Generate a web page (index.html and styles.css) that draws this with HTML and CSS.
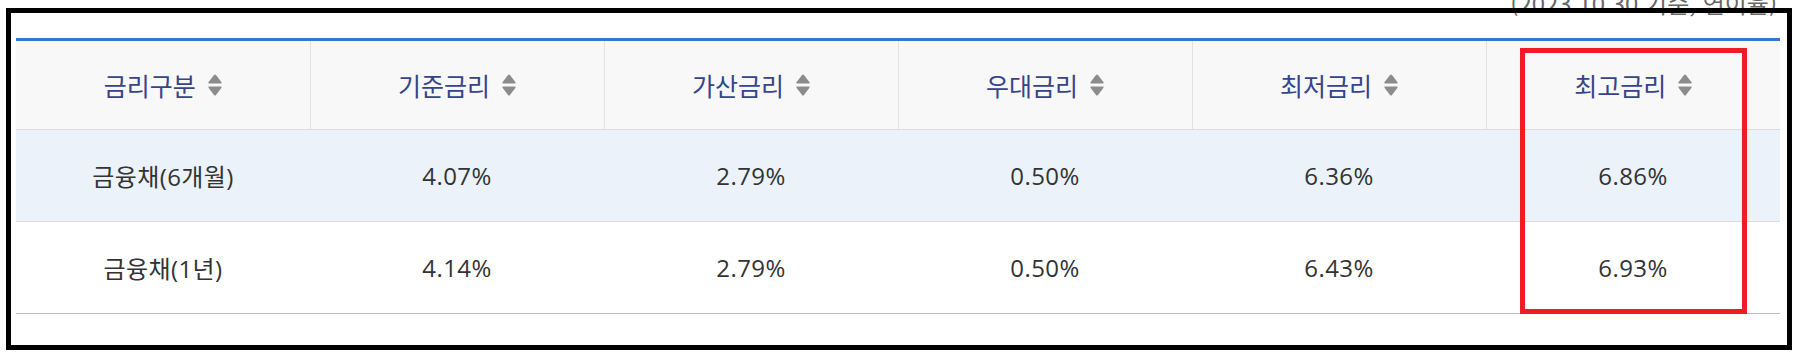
FILE: index.html
```html
<!DOCTYPE html>
<html lang="ko">
<head>
<meta charset="utf-8">
<title>금리 안내</title>
<link rel="stylesheet" href="styles.css">
</head>
<body>
<div class="page">
  <div class="wrap">
    <p class="caption">(2023.10.30 기준, 연이율)</p>
    <table class="rates">
      <thead>
        <tr>
          <th><span class="th-in">금리구분<svg class="sort" viewBox="0 0 14 22" width="14" height="22"><path d="M6 1 Q7 0 8 1 L13.5 8.2 Q14 9.5 12.6 9.5 L1.4 9.5 Q0 9.5 0.5 8.2 Z"/><path d="M1.4 12.5 L12.6 12.5 Q14 12.5 13.5 13.8 L8 21 Q7 22 6 21 L0.5 13.8 Q0 12.5 1.4 12.5 Z"/></svg></span></th>
          <th><span class="th-in">기준금리<svg class="sort" viewBox="0 0 14 22" width="14" height="22"><path d="M6 1 Q7 0 8 1 L13.5 8.2 Q14 9.5 12.6 9.5 L1.4 9.5 Q0 9.5 0.5 8.2 Z"/><path d="M1.4 12.5 L12.6 12.5 Q14 12.5 13.5 13.8 L8 21 Q7 22 6 21 L0.5 13.8 Q0 12.5 1.4 12.5 Z"/></svg></span></th>
          <th><span class="th-in">가산금리<svg class="sort" viewBox="0 0 14 22" width="14" height="22"><path d="M6 1 Q7 0 8 1 L13.5 8.2 Q14 9.5 12.6 9.5 L1.4 9.5 Q0 9.5 0.5 8.2 Z"/><path d="M1.4 12.5 L12.6 12.5 Q14 12.5 13.5 13.8 L8 21 Q7 22 6 21 L0.5 13.8 Q0 12.5 1.4 12.5 Z"/></svg></span></th>
          <th><span class="th-in">우대금리<svg class="sort" viewBox="0 0 14 22" width="14" height="22"><path d="M6 1 Q7 0 8 1 L13.5 8.2 Q14 9.5 12.6 9.5 L1.4 9.5 Q0 9.5 0.5 8.2 Z"/><path d="M1.4 12.5 L12.6 12.5 Q14 12.5 13.5 13.8 L8 21 Q7 22 6 21 L0.5 13.8 Q0 12.5 1.4 12.5 Z"/></svg></span></th>
          <th><span class="th-in">최저금리<svg class="sort" viewBox="0 0 14 22" width="14" height="22"><path d="M6 1 Q7 0 8 1 L13.5 8.2 Q14 9.5 12.6 9.5 L1.4 9.5 Q0 9.5 0.5 8.2 Z"/><path d="M1.4 12.5 L12.6 12.5 Q14 12.5 13.5 13.8 L8 21 Q7 22 6 21 L0.5 13.8 Q0 12.5 1.4 12.5 Z"/></svg></span></th>
          <th><span class="th-in">최고금리<svg class="sort" viewBox="0 0 14 22" width="14" height="22"><path d="M6 1 Q7 0 8 1 L13.5 8.2 Q14 9.5 12.6 9.5 L1.4 9.5 Q0 9.5 0.5 8.2 Z"/><path d="M1.4 12.5 L12.6 12.5 Q14 12.5 13.5 13.8 L8 21 Q7 22 6 21 L0.5 13.8 Q0 12.5 1.4 12.5 Z"/></svg></span></th>
        </tr>
      </thead>
      <tbody>
        <tr class="hl">
          <td>금융채(6개월)</td>
          <td>4.07%</td>
          <td>2.79%</td>
          <td>0.50%</td>
          <td>6.36%</td>
          <td>6.86%</td>
        </tr>
        <tr>
          <td>금융채(1년)</td>
          <td>4.14%</td>
          <td>2.79%</td>
          <td>0.50%</td>
          <td>6.43%</td>
          <td>6.93%</td>
        </tr>
      </tbody>
    </table>
  </div>
  <div class="frame"></div>
  <div class="mark"></div>
</div>
</body>
</html>
```

FILE: styles.css
```css
* { box-sizing: border-box; }

html, body {
  margin: 0;
  padding: 0;
  background: #ffffff;
}

body {
  font-family: "Open Sans", "Noto Sans CJK KR", sans-serif;
  color: #333333;
}

.page {
  position: relative;
  width: 1796px;
  height: 360px;
  overflow: hidden;
  background: #ffffff;
}

.wrap {
  padding: 0 16px;
}

.caption {
  margin: -12px 0 20px 0;
  height: 30px;
  line-height: 30px;
  font-size: 24px;
  text-align: right;
  padding-right: 3px;
  color: #666666;
  font-family: "Noto Sans CJK KR", sans-serif;
}

.rates {
  width: 1764px;
  border-collapse: collapse;
  table-layout: fixed;
  border-top: 3px solid #3478d4;
  border-bottom: 1px solid #b6bbd5;
}

.rates th {
  height: 90px;
  padding: 0;
  background: #f8f8f8;
  border-bottom: 1px solid #dcdcdc;
  border-left: 1px solid #e2e2e2;
  font-weight: normal;
  font-size: 25px;
  color: #36448c;
  font-family: "Noto Sans CJK KR", sans-serif;
  vertical-align: middle;
}

.rates th:first-child { border-left: none; }

.th-in {
  display: inline-flex;
  align-items: center;
  gap: 12px;
}

.sort {
  fill: #8c8c8c;
  flex: none;
}

.rates td {
  height: 92px;
  padding: 0;
  text-align: center;
  font-size: 24px;
  letter-spacing: 0.4px;
  color: #333333;
  border-bottom: 1px solid #dcdcdc;
  vertical-align: middle;
}

.rates tbody tr:last-child td { border-bottom: none; }

.rates tr.hl td { background: #ebf2fa; }

.frame {
  position: absolute;
  left: 6px;
  top: 8px;
  width: 1786px;
  height: 342px;
  border: 5px solid #000000;
  pointer-events: none;
}

.mark {
  position: absolute;
  left: 1520px;
  top: 48px;
  width: 227px;
  height: 266px;
  border: 5px solid #ee1c25;
  pointer-events: none;
}
```
